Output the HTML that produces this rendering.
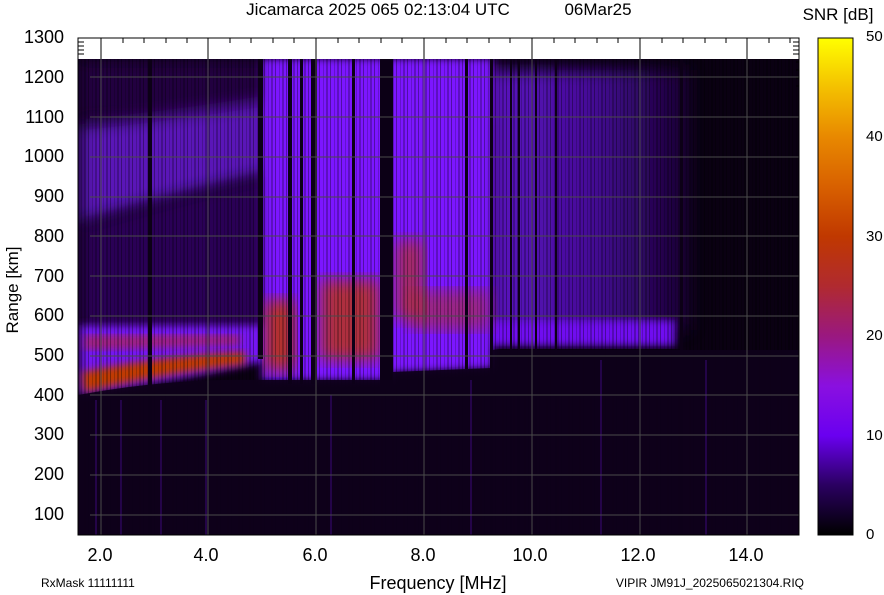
<!DOCTYPE html>
<html><head><meta charset="utf-8"><style>
html,body{margin:0;padding:0;background:#fff;width:884px;height:595px;overflow:hidden;font-family:"Liberation Sans",sans-serif;}
svg{position:absolute;left:0;top:0}
</style></head><body>
<svg width="884" height="595" viewBox="0 0 884 595" xmlns="http://www.w3.org/2000/svg" font-family="Liberation Sans, sans-serif">
<defs>
<filter id="b4"><feGaussianBlur stdDeviation="4"/></filter>
<filter id="b2"><feGaussianBlur stdDeviation="2"/></filter>
<filter id="b8"><feGaussianBlur stdDeviation="8"/></filter>
<linearGradient id="cb" x1="0" y1="1" x2="0" y2="0">
<stop offset="0" stop-color="#000"/>
<stop offset="0.1" stop-color="#2a0060"/>
<stop offset="0.2" stop-color="#6a00f0"/>
<stop offset="0.3" stop-color="#8a10e0"/>
<stop offset="0.4" stop-color="#9a1880"/>
<stop offset="0.5" stop-color="#b02a30"/>
<stop offset="0.6" stop-color="#c03800"/>
<stop offset="0.7" stop-color="#d86000"/>
<stop offset="0.8" stop-color="#e88800"/>
<stop offset="0.9" stop-color="#f4c000"/>
<stop offset="1" stop-color="#ffff00"/>
</linearGradient>
<linearGradient id="rdim" x1="0" y1="0" x2="1" y2="0">
<stop offset="0" stop-color="#6a14e0"/>
<stop offset="0.5" stop-color="#5010b0"/>
<stop offset="1" stop-color="#1a0034"/>
</linearGradient>
<pattern id="st" width="11" height="476" patternUnits="userSpaceOnUse">
<rect x="0" y="0" width="1" height="476" fill="#000" opacity="0.35"/>
<rect x="4" y="0" width="1" height="476" fill="#000" opacity="0.2"/>
<rect x="7" y="0" width="2" height="476" fill="#000" opacity="0.25"/>
</pattern>
<clipPath id="pa"><rect x="78" y="59" width="721" height="476"/></clipPath>
</defs>
<text x="378" y="15" font-size="17" text-anchor="middle">Jicamarca 2025 065 02:13:04 UTC</text>
<text x="598" y="15" font-size="17" text-anchor="middle">06Mar25</text>
<text x="838" y="20" font-size="17" text-anchor="middle">SNR [dB]</text>
<rect x="78" y="38" width="721" height="497" fill="#fff" stroke="#000"/>
<g clip-path="url(#pa)">
<rect x="78" y="59" width="721" height="476" fill="#0a0012"/>
<rect x="78" y="395" width="721" height="140" fill="#120020"/>
<rect x="78" y="59" width="420" height="60" fill="#220040" filter="url(#b8)"/>
<rect x="490" y="70" width="200" height="260" fill="url(#rdim)" filter="url(#b8)" opacity="0.85"/>
<rect x="490" y="320" width="185" height="26" fill="#7010f0" filter="url(#b4)"/>
<path d="M80 125 Q180 115 270 100 L270 175 Q180 195 80 225 Z" fill="#5a12b8" filter="url(#b8)"/>
<path d="M80 225 Q180 195 270 175 L270 330 L80 330 Z" fill="#2a0656" filter="url(#b8)"/>
<path d="M80 325 L270 325 L270 360 Q180 380 80 395 Z" fill="#7414f0" filter="url(#b4)"/>
<path d="M262 59 L492 59 L492 368 L392 372 L392 380 L262 380 Z" fill="#7c18ff" filter="url(#b4)"/>
<path d="M82 372 Q170 355 245 352 L245 364 Q170 372 84 392 Z" fill="#c03a00" filter="url(#b4)"/>
<path d="M84 335 L240 335 L240 345 L84 350 Z" fill="#b02850" filter="url(#b4)" opacity="0.7"/>
<rect x="265" y="300" width="30" height="70" fill="#c03800" filter="url(#b8)" opacity="0.85"/>
<rect x="320" y="280" width="60" height="80" fill="#c03800" filter="url(#b8)" opacity="0.75"/>
<rect x="395" y="240" width="30" height="80" fill="#c03800" filter="url(#b8)" opacity="0.6"/>
<rect x="410" y="290" width="80" height="40" fill="#b03020" filter="url(#b8)" opacity="0.55"/>
<rect x="78" y="59" width="721" height="476" fill="url(#st)"/>
<g fill="#0c0016">
<rect x="148" y="59" width="4" height="476"/>
<rect x="258" y="59" width="5" height="300"/>
<rect x="288" y="59" width="4" height="325"/>
<rect x="300" y="59" width="3" height="325"/>
<rect x="311" y="59" width="6" height="325"/>
<rect x="352" y="59" width="3" height="325"/>
<rect x="380" y="59" width="13" height="330"/>
<rect x="465" y="59" width="3" height="310"/>
<rect x="490" y="59" width="3" height="476"/>
<rect x="510" y="59" width="2" height="476"/>
<rect x="518" y="59" width="2" height="476"/>
<rect x="535" y="59" width="2" height="476"/>
<rect x="555" y="59" width="2" height="476"/>
<rect x="680" y="59" width="3" height="476"/>
</g>
<path d="M78 395 Q170 378 262 380 L392 380 L392 372 L492 368 L492 350 L799 350 L799 535 L78 535 Z" fill="#0e001a" opacity="0.92"/>
<g fill="#3a0878" opacity="0.5">
<rect x="95" y="400" width="2" height="135"/><rect x="120" y="400" width="2" height="135"/>
<rect x="160" y="400" width="2" height="135"/><rect x="205" y="400" width="2" height="135"/>
<rect x="330" y="395" width="2" height="140"/><rect x="470" y="380" width="2" height="155"/>
<rect x="600" y="360" width="2" height="175"/><rect x="705" y="360" width="2" height="175"/>
</g>
</g>
<g stroke="#4a4a4a" stroke-width="1">
<line x1="101" y1="38" x2="101" y2="535"/><line x1="208" y1="38" x2="208" y2="535"/>
<line x1="316" y1="38" x2="316" y2="535"/><line x1="424" y1="38" x2="424" y2="535"/>
<line x1="532" y1="38" x2="532" y2="535"/><line x1="640" y1="38" x2="640" y2="535"/>
<line x1="747" y1="38" x2="747" y2="535"/>
<line x1="90" y1="77" x2="799" y2="77"/><line x1="90" y1="117" x2="799" y2="117"/>
<line x1="90" y1="157" x2="799" y2="157"/><line x1="90" y1="197" x2="799" y2="197"/>
<line x1="90" y1="236" x2="799" y2="236"/><line x1="90" y1="276" x2="799" y2="276"/>
<line x1="90" y1="316" x2="799" y2="316"/><line x1="90" y1="356" x2="799" y2="356"/>
<line x1="90" y1="395" x2="799" y2="395"/><line x1="90" y1="435" x2="799" y2="435"/>
<line x1="90" y1="475" x2="799" y2="475"/><line x1="90" y1="515" x2="799" y2="515"/>
</g>
<g stroke="#000"><line x1="101" y1="38" x2="101" y2="59"/><line x1="208" y1="38" x2="208" y2="59"/><line x1="316" y1="38" x2="316" y2="59"/><line x1="424" y1="38" x2="424" y2="59"/><line x1="532" y1="38" x2="532" y2="59"/><line x1="640" y1="38" x2="640" y2="59"/><line x1="747" y1="38" x2="747" y2="59"/>
<path d="M123 38v5M144 38v5M166 38v5M187 38v5M230 38v5M251 38v5M273 38v5M294 38v5M338 38v5M359 38v5M381 38v5M402 38v5M446 38v5M467 38v5M489 38v5M510 38v5M554 38v5M575 38v5M597 38v5M618 38v5M662 38v5M683 38v5M705 38v5M726 38v5M769 38v5M790 38v5M78 42h6M78 46h6M78 50h6M78 54h6M799 42h-6M799 46h-6M799 50h-6M799 54h-6M799 62h-3M799 70h-3M799 78h-3M799 86h-3"/></g>
<rect x="78" y="38" width="721" height="497" fill="none" stroke="#000"/>
<g font-size="18" text-anchor="end">
<text x="64" y="43">1300</text><text x="64" y="83">1200</text><text x="64" y="123">1100</text><text x="64" y="162">1000</text>
<text x="64" y="202">900</text><text x="64" y="242">800</text><text x="64" y="282">700</text><text x="64" y="321">600</text>
<text x="64" y="361">500</text><text x="64" y="401">400</text><text x="64" y="440">300</text><text x="64" y="480">200</text><text x="64" y="520">100</text>
</g>
<g font-size="18" text-anchor="middle">
<text x="100" y="561">2.0</text><text x="206" y="561">4.0</text><text x="315" y="561">6.0</text><text x="423" y="561">8.0</text>
<text x="530" y="561">10.0</text><text x="638" y="561">12.0</text><text x="746" y="561">14.0</text>
<text x="438" y="589">Frequency [MHz]</text>
</g>
<text x="18" y="290" font-size="17" text-anchor="middle" transform="rotate(-90 18 290)">Range [km]</text>
<text x="41" y="587" font-size="12">RxMask 11111111</text>
<text x="804" y="587" font-size="12" text-anchor="end">VIPIR  JM91J_2025065021304.RIQ</text>
<rect x="818" y="38" width="35" height="497" fill="url(#cb)" stroke="#000"/>
<g font-size="15"><text x="866" y="41">50</text><text x="866" y="141">40</text><text x="866" y="241">30</text><text x="866" y="340">20</text><text x="866" y="440">10</text><text x="866" y="539">0</text></g>
</svg>
</body></html>
